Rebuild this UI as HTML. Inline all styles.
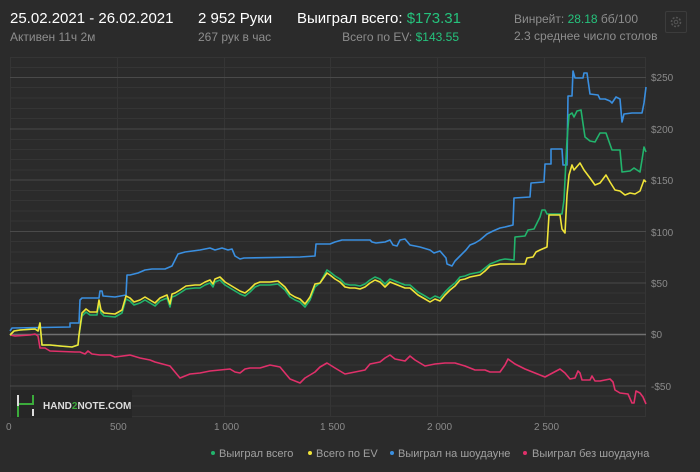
<!DOCTYPE html><html><head><meta charset="utf-8"><style>
body{margin:0;width:700px;height:472px;background:#2b2b2b;font-family:"Liberation Sans",sans-serif;overflow:hidden;position:relative;color:#fff}
.t{position:absolute;white-space:nowrap}
.g{color:#8d8d8d}.gr{color:#25c27c}
</style></head><body>
<div class="t" style="left:10px;top:10px;font-size:15px;color:#fff">25.02.2021 - 26.02.2021</div>
<div class="t g" style="left:10px;top:30px;font-size:12px">Активен 11ч 2м</div>
<div class="t" style="left:198px;top:10px;font-size:15px">2 952 Руки</div>
<div class="t g" style="left:198px;top:30px;font-size:12px">267 рук в час</div>
<div class="t" style="left:297px;top:10px;font-size:15px">Выиграл всего: <span class="gr">$173.31</span></div>
<div class="t" style="right:241px;top:30px;font-size:12px;color:#8d8d8d">Всего по EV: <span class="gr">$143.55</span></div>
<div class="t g" style="left:514px;top:12px;font-size:12px">Винрейт: <span class="gr">28.18</span> бб/100</div>
<div class="t g" style="left:514px;top:29px;font-size:12px">2.3 среднее число столов</div>
<div style="position:absolute;left:665px;top:11px;width:20px;height:20px;border:1px solid #3c3c3c;border-radius:2px"></div>
<svg style="position:absolute;left:669px;top:15px" width="14" height="14" viewBox="0 0 14 14"><circle cx="7" cy="7" r="4.5" fill="none" stroke="#555" stroke-width="1.6" stroke-dasharray="2 1.5"/><circle cx="7" cy="7" r="1.8" fill="none" stroke="#555"/></svg>
<svg style="position:absolute;left:0;top:0" width="700" height="472">
<g stroke="#353535" stroke-width="1">
<path d="M10 67.5H646M10 87.5H646M10 98H646M10 108.5H646M10 118.5H646M10 139.5H646M10 149.5H646M10 159.5H646M10 170H646M10 190.5H646M10 200.5H646M10 211H646M10 221H646M10 241.5H646M10 252H646M10 262H646M10 272.5H646M10 293H646M10 303.5H646M10 313.5H646M10 323.5H646M10 344.5H646M10 354.5H646M10 365H646M10 375H646M10 396H646M10 406H646"/>
<path d="M117.5 57V417M224.5 57V417M330.5 57V417M437.5 57V417M544.5 57V417M10.5 57V417M645.5 57V417M10 57.5H646M10 416.5H646"/>
</g>
<g stroke="#4a4a4a"><path d="M10 77.5H646M10 129H646M10 180H646M10 231.5H646M10 283H646M10 386H646"/></g>
<path d="M10 334.5H646" stroke="#707070" stroke-width="1.5"/>
<g fill="none" stroke-width="1.6" stroke-linejoin="round">
<polyline stroke="#e0306a" points="10,335 15,336 30,335 35,334 38,336 40,348 45,348 50,351 75,352 80,352 85,354 88,351 92,354 100,355 110,355 115,357 130,355 140,358 150,360 155,362 170,366 175,372 180,378 185,376 190,374 200,373 210,371 230,369 235,372 240,373 245,369 250,368 260,368 270,365 275,366 280,367 290,379 300,383 305,378 310,375 315,372 320,367 327,363 335,368 345,374 355,372 365,370 370,364 380,362 385,358 390,355 395,359 405,361 410,356 415,360 425,366 435,364 445,363 455,363 465,366 475,370 485,370 490,372 500,372 505,365 508,359 515,364 525,369 535,373 545,377 560,369 565,373 570,379 575,378 578,371 580,373 582,380 590,380 592,376 595,381 600,381 605,380 610,379 613,382 615,390 620,393 628,394 632,403 634,403 636,391 640,393 643,397 646,404"/>
<polyline stroke="#3a8fe0" points="10,331 12,328 70,327 70,323 79,323 80,300 82,298 99,298 100,291 102,291 103,296 115,297 126,295 127,275 130,275 138,273 145,270 152,269 165,269 172,266 178,254 185,252 200,250 210,248 215,250 222,248 228,250 232,249 235,256 240,259 244,258 300,257 315,256 316,244 330,244 335,242 342,240 350,240 365,240 370,240 372,242 376,243 385,242 390,240 393,245 397,246 400,240 405,239 410,245 420,247 430,250 434,253 440,251 446,258 447,264 452,266 455,261 460,256 466,250 470,245 475,243 480,240 487,234 493,231 500,228 505,227 513,225 514,198 530,197 531,183 544,182 545,164 551,164 551,149 562,149 563,165 567,165 568,96 572,96 573,71 575,78 583,78 584,73 587,73 590,94 598,95 600,99 605,99 610,101 612,103 616,97 620,99 622,122 624,114 632,113 642,113 644,103 646,87"/>
<polyline stroke="#22b46c" points="10,335 14,331 20,330 35,329 38,331 40,323 42,345 50,345 60,346 72,347 78,345 79,335 82,316 86,312 90,315 97,315 99,303 101,313 104,316 115,317 122,313 126,299 130,301 134,305 140,303 145,300 150,303 155,306 160,301 167,298 170,307 172,297 175,296 180,293 186,289 195,288 200,288 205,285 210,283 213,287 215,282 220,280 225,285 230,288 235,291 240,294 245,296 250,292 255,287 260,285 270,285 278,284 285,290 290,297 295,300 300,302 305,307 310,300 315,287 320,283 327,270 330,272 335,276 340,279 345,284 350,285 355,285 360,286 365,284 370,280 375,277 380,279 385,284 390,279 395,281 400,283 405,285 410,285 418,292 425,296 430,299 435,296 440,298 445,292 450,287 455,283 460,277 465,276 470,274 480,272 485,268 490,264 495,262 500,260 505,259 514,260 515,237 525,236 528,230 534,229 536,225 540,217 542,210 545,210 547,214 562,214 564,200 567,140 569,115 572,113 574,117 577,111 581,110 585,137 590,141 595,142 600,133 606,133 612,150 620,150 622,172 630,171 634,168 640,172 642,160 644,147 646,152"/>
<polyline stroke="#f0e438" points="10,335 14,331 20,330 35,329 38,331 40,323 42,345 50,345 60,346 72,347 78,345 79,335 82,313 86,309 90,312 97,312 99,300 101,310 104,313 115,314 122,310 126,296 130,298 134,302 140,300 145,297 150,300 155,303 160,298 167,295 170,304 172,294 175,293 180,290 186,286 195,285 200,285 205,282 210,280 213,284 215,279 220,277 225,282 230,285 235,288 240,291 245,293 250,289 255,284 260,282 270,282 278,281 285,287 290,294 295,297 300,299 305,304 310,297 315,284 320,283 327,273 330,275 335,279 340,282 345,287 350,288 355,288 360,289 365,287 370,283 375,280 380,282 385,287 390,282 395,284 400,286 405,288 410,288 418,295 425,299 430,302 435,299 440,301 445,295 450,290 455,286 460,280 465,279 470,277 480,275 485,271 490,266 500,264 510,264 525,264 527,258 533,257 536,252 540,250 547,247 549,215 560,215 562,229 565,233 567,195 569,175 572,165 574,170 580,163 584,170 590,178 595,185 600,183 606,175 610,182 615,190 620,191 625,195 630,193 635,194 640,191 644,180 646,182"/>
</g>
<g fill="#8a8a8a" font-size="10" font-family="Liberation Sans,sans-serif">
<text x="651" y="81">$250</text><text x="651" y="133">$200</text><text x="651" y="184">$150</text><text x="651" y="236">$100</text><text x="651" y="287">$50</text><text x="651" y="338">$0</text><text x="651" y="390">-$50</text>
<text x="6" y="430">0</text><text x="110" y="430">500</text><text x="214" y="430">1 000</text><text x="320" y="430">1 500</text><text x="427" y="430">2 000</text><text x="534" y="430">2 500</text>
</g>
<rect x="11" y="390" width="121" height="28" fill="#262626"/>
<path d="M18 395v5M18 404v13M33 395v10M33 409v7" stroke="#ddd" stroke-width="2"/>
<path d="M18 404v12M18 404H33V395" stroke="#3bab3b" stroke-width="2" fill="none"/>
<path d="M18 400v10" stroke="#ddd" stroke-width="2"/><path d="M18 406v11" stroke="#3bab3b" stroke-width="2"/>
<text x="43" y="409" font-size="10" font-weight="bold" fill="#ddd" font-family="Liberation Sans,sans-serif">HAND<tspan fill="#3bab3b">2</tspan>NOTE.COM</text>
<g font-size="11" fill="#a0a0a0" font-family="Liberation Sans,sans-serif">
<circle cx="213" cy="453" r="2" fill="#22b46c"/><text x="219" y="457">Выиграл всего</text>
<circle cx="310" cy="453" r="2" fill="#f0e438"/><text x="316" y="457">Всего по EV</text>
<circle cx="392" cy="453" r="2" fill="#3a8fe0"/><text x="398" y="457">Выиграл на шоудауне</text>
<circle cx="525" cy="453" r="2" fill="#e0306a"/><text x="532" y="457">Выиграл без шоудауна</text>
</g>
</svg>
</body></html>
